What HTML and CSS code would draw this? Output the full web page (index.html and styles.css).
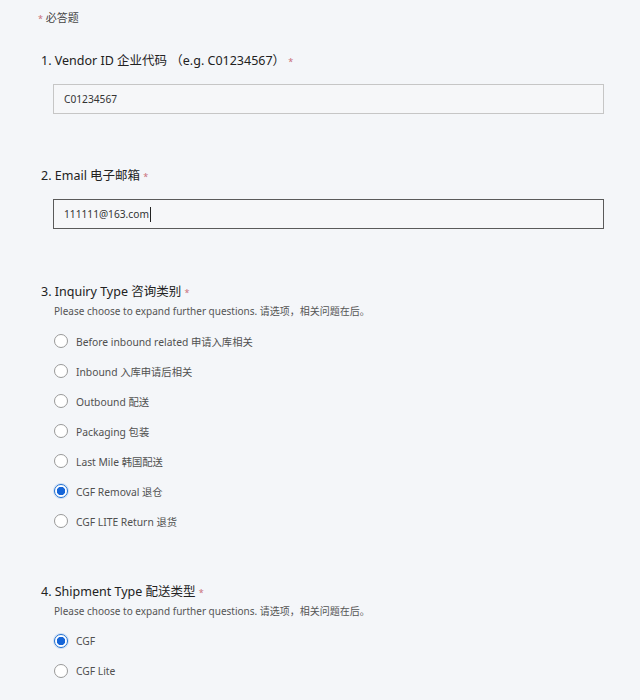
FILE: index.html
```html
<!DOCTYPE html>
<html lang="zh">
<head>
<meta charset="utf-8">
<link rel="stylesheet" href="styles.css">
</head>
<body>
<div class="form">
  <div class="required-note"><span class="star">*</span> 必答题</div>

  <div class="question q1">
    <div class="title">1. Vendor ID 企业代码 （e.g. C01234567） <span class="star">*</span></div>
    <div class="input">C01234567</div>
  </div>

  <div class="question q2">
    <div class="title">2. Email 电子邮箱 <span class="star">*</span></div>
    <div class="input active">111111@163.com<span class="caret"></span></div>
  </div>

  <div class="question q3">
    <div class="title">3. Inquiry Type 咨询类别 <span class="star">*</span></div>
    <div class="subtitle">Please choose to expand further questions. 请选项，相关问题在后。</div>
    <div class="options">
      <div class="option"><span class="radio"></span>Before inbound related 申请入库相关</div>
      <div class="option"><span class="radio"></span>Inbound 入库申请后相关</div>
      <div class="option"><span class="radio"></span>Outbound 配送</div>
      <div class="option"><span class="radio"></span>Packaging 包装</div>
      <div class="option"><span class="radio"></span>Last Mile 韩国配送</div>
      <div class="option"><span class="radio checked"></span>CGF Removal 退仓</div>
      <div class="option"><span class="radio"></span>CGF LITE Return 退货</div>
    </div>
  </div>

  <div class="question q4">
    <div class="title">4. Shipment Type 配送类型 <span class="star">*</span></div>
    <div class="subtitle">Please choose to expand further questions. 请选项，相关问题在后。</div>
    <div class="options">
      <div class="option"><span class="radio checked"></span>CGF</div>
      <div class="option"><span class="radio"></span>CGF Lite</div>
    </div>
  </div>
</div>
</body>
</html>
```

FILE: styles.css
```css
html, body {
  margin: 0;
  padding: 0;
  background: #f4f6f9;
}
body {
  font-family: "Noto Sans", "Noto Sans CJK SC", sans-serif;
  color: #2b2b2b;
}
.form {
  padding: 10px 36px 0 38px;
  width: 566px;
}
.required-note {
  font-size: 11px;
  color: #444;
  line-height: 16px;
}
.star {
  color: #c9707a;
  font-size: 9px;
  line-height: 1;
}
.question {
  display: flex;
  flex-direction: column;
}
.q1 { margin-top: 26px; }
.q2 { margin-top: 53px; }
.q3 { margin-top: 54px; }
.q4 { margin-top: 47px; }
.title {
  font-size: 12.5px;
  line-height: 18px;
  padding-left: 3px;
  color: #222;
}
.subtitle {
  font-size: 10px;
  line-height: 16px;
  padding-left: 16px;
  color: #555;
  margin-top: 2px;
}
.input {
  margin: 14px 0 0 15px;
  height: 28px;
  border: 1px solid #c6c6c6;
  background: #f6f7f9;
  font-size: 10.2px;
  line-height: 28px;
  padding-left: 10px;
  color: #333;
  display: flex;
  align-items: center;
}
.input.active {
  border-color: #5a5a5a;
}
.caret {
  display: inline-block;
  width: 1px;
  height: 15px;
  background: #222;
  margin-left: 1px;
}
.options {
  display: flex;
  flex-direction: column;
  margin-top: 7px;
  padding-left: 16px;
}
.option {
  display: flex;
  align-items: center;
  height: 30px;
  font-size: 10.3px;
  color: #505050;
}
.radio {
  width: 12px;
  height: 12px;
  border: 1px solid #999;
  border-radius: 50%;
  background: #fff;
  margin-right: 8px;
  box-sizing: content-box;
  flex-shrink: 0;
}
.radio.checked {
  border-color: #1f6fd1;
  background: radial-gradient(circle, #1565d8 0 4px, #fff 4.5px);
  box-shadow: 0 0 0 1px #cfe0f6;
}
```
